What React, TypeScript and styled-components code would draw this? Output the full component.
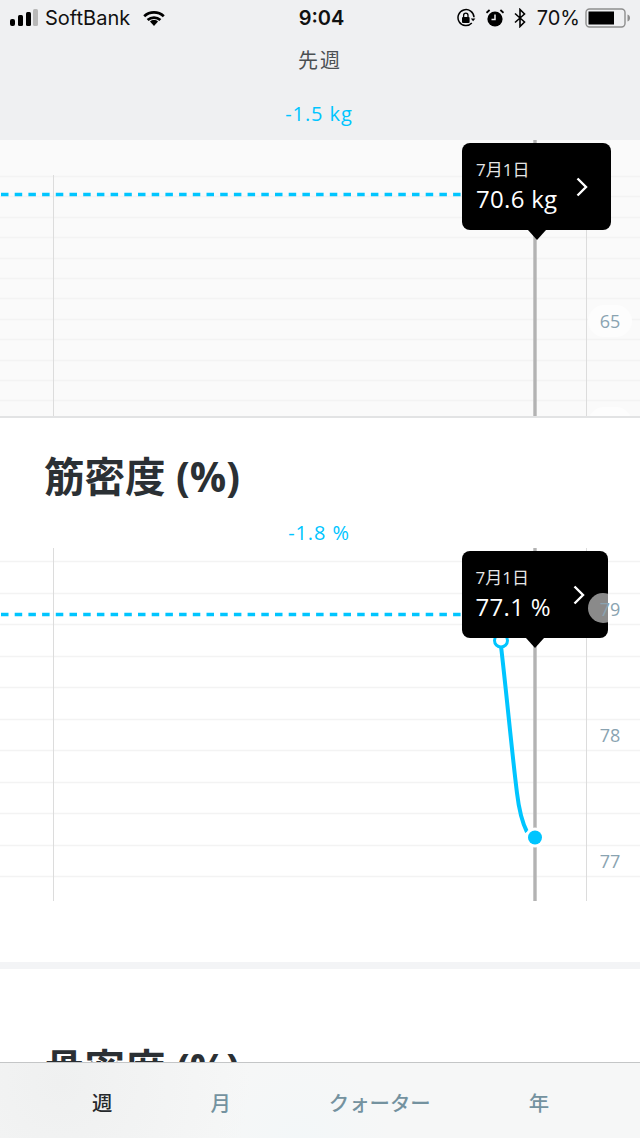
import React, {FC} from 'react';
import styled, {createGlobalStyle} from 'styled-components';

const UI_FONT = `"Open Sans", "Noto Sans CJK JP", sans-serif`;
const BLUE = '#00c5ff';

const GlobalStyle = createGlobalStyle`
  html, body {
    margin: 0;
    padding: 0;
    background: #ffffff;
  }
`;

const Page = styled.div`
  display: flex;
  flex-direction: column;
  width: 640px;
  height: 1138px;
  overflow: hidden;
  font-family: ${UI_FONT};
`;

const Header = styled.header`
  height: 140px;
  flex: none;
  background: #eff0f2;
  text-align: center;
`;

const StatusBar = styled.div`
  display: grid;
  grid-template-columns: 1fr auto 1fr;
  align-items: center;
  height: 35px;
  padding: 0 9px 0 10px;
  font-family: Inter, "Liberation Sans", sans-serif;
  color: #111;
`;

const StatusGroup = styled.div<{right?: boolean}>`
  display: flex;
  align-items: center;
  justify-content: ${(props) => (props.right ? 'flex-end' : 'flex-start')};
  gap: ${(props) => (props.right ? '10px' : '7px')};
`;

const Carrier = styled.span`
  margin-right: 5px;
  font-size: 20px;
`;

const Clock = styled.span`
  margin-left: 2px;
  font-weight: 600;
  font-size: 20px;
`;

const Percent = styled.span`
  margin-left: 1px;
  margin-right: -5px;
  font-size: 20px;
`;

const PeriodLabel = styled.div`
  margin-top: 11px;
  height: 30px;
  line-height: 30px;
  font-size: 20px;
  letter-spacing: 2px;
  color: #4a4f52;
`;

const Delta = styled.div`
  height: 24px;
  padding-right: 2px;
  line-height: 24px;
  font-size: 20px;
  letter-spacing: 0.9px;
  color: ${BLUE};
  text-align: center;
`;

const HeaderDelta = styled(Delta)`
  margin-top: 26px;
`;

const Content = styled.main`
  flex: 1;
  min-height: 0;
  overflow: hidden;
`;

const WeightPanel = styled.section`
  background: #fafafa;
  border-bottom: 2px solid #e2e3e4;
`;

const ChartCanvas = styled.div<{h: number}>`
  position: relative;
  width: 640px;
  height: ${(props) => props.h}px;
  overflow: hidden;

  svg {
    display: block;
  }
`;

const MetricSection = styled.section<{top: number}>`
  padding-top: ${(props) => props.top}px;
  background: #ffffff;
`;

const MetricTitle = styled.h2`
  margin: 0 0 23px 44px;
  height: 42px;
  line-height: 42px;
  font-size: 40.5px;
  font-weight: 700;
  color: #2b3034;
`;

const MetricChart = styled.div`
  margin-top: 3px;
  padding-bottom: 61px;
`;

const SectionDivider = styled.div`
  height: 7px;
  background: #f3f4f6;
`;

const Tooltip = styled.div<{left: number; top: number; w: number}>`
  position: absolute;
  left: ${(props) => props.left}px;
  top: ${(props) => props.top}px;
  width: ${(props) => props.w}px;
  height: 87px;
  box-sizing: border-box;
  padding: 14px 0 0 14px;
  background: #000;
  border-radius: 8px;
  color: #fff;

  &::after {
    content: '';
    position: absolute;
    left: 50%;
    bottom: -10px;
    margin-left: -9px;
    border-left: 9px solid transparent;
    border-right: 9px solid transparent;
    border-top: 10px solid #000;
  }
`;

const TooltipDate = styled.div`
  position: relative;
  height: 26px;
  line-height: 26px;
  font-size: 17px;
  color: #e6e6e6;
`;

const TooltipValue = styled.div`
  position: relative;
  height: 32px;
  line-height: 32px;
  font-size: 24px;
  letter-spacing: 0.3px;
`;

const TooltipChevron = styled.svg`
  position: absolute;
  right: 23px;
  top: 34px;
`;

const TouchClip = styled.div`
  position: absolute;
  inset: 0;
  border-radius: 8px;
  overflow: hidden;
`;

const TouchRipple = styled.div`
  position: absolute;
  left: 126px;
  top: 42px;
  width: 30px;
  height: 30px;
  border-radius: 50%;
  background: #8a8a8a;
`;

const AxisLabel = styled.span<{y: number; halo?: boolean}>`
  position: absolute;
  left: 588px;
  top: ${(props) => props.y}px;
  width: 44px;
  height: 32px;
  line-height: 32px;
  text-align: center;
  font-size: 18px;
  color: #8aa3b1;
  border-radius: 16px;
  background: ${(props) => (props.halo ? '#fdfdfd' : 'transparent')};
`;

const TabBar = styled.nav`
  flex: none;
  display: flex;
  align-items: center;
  gap: 98px;
  height: 76px;
  padding: 2px 0 0 92px;
  box-sizing: border-box;
  border-top: 1px solid #c4c6c7;
  background:
    radial-gradient(circle at 60px 20px, #eff0f0 0, transparent 190px),
    radial-gradient(circle at 300px 80px, #f3f7f8 0, transparent 90px),
    #f6f7f7;
`;

const Tab = styled.span<{active?: boolean}>`
  font-size: 20.4px;
  font-weight: 500;
  color: ${(props) => (props.active ? '#25292c' : '#74929f')};
`;

// grid lines are evenly spaced, start and step come from the screenshot
const gridYs = (start: number, step: number, count: number) =>
  Array.from({length: count}, (_, i) => Math.round(start + step * i) + 0.5);

interface GridProps {
  h: number;
  lines: number[];
  axisTop: number;
  gridColor: string;
}

const ChartGrid: FC<GridProps> = ({h, lines, axisTop, gridColor}) => (
  <>
    {lines.map((y) => (
      <line key={y} x1={0} x2={640} y1={y} y2={y} stroke={gridColor} strokeWidth={1.5} />
    ))}
    <line x1={53.5} x2={53.5} y1={axisTop} y2={h} stroke="#dcdcdc" />
    <line x1={586.5} x2={586.5} y1={axisTop} y2={h} stroke="#dcdcdc" />
    <line x1={535} x2={535} y1={0} y2={h} stroke="#b3b3b3" strokeWidth={3.4} />
  </>
);

const Chevron: FC = () => (
  <TooltipChevron width="12" height="20" viewBox="0 0 12 20">
    <path d="M1.5 1.5l8.5 8.5-8.5 8.5" fill="none" stroke="#fff" strokeWidth="2.4" />
  </TooltipChevron>
);

const SignalIcon: FC = () => (
  <svg width="28" height="17" viewBox="0 0 28 17">
    <rect x="0" y="10" width="5" height="7" rx="2" fill="#000" />
    <rect x="8" y="6" width="5" height="11" rx="1.5" fill="#000" />
    <rect x="16" y="3" width="5" height="14" rx="1.5" fill="#000" />
    <rect x="23" y="0" width="5" height="17" rx="1.5" fill="#b8b8b8" />
  </svg>
);

const WifiIcon: FC = () => (
  <svg width="24" height="17" viewBox="0 0 24 17">
    <path d="M12 17l-4-4.6c2.2-1.9 5.8-1.9 8 0z" fill="#000" />
    <path d="M2.2 7.2c5.6-5 14-5 19.6 0M5.6 11c3.7-3.2 9.1-3.2 12.8 0" fill="none" stroke="#000" strokeWidth="2.8" />
  </svg>
);

const RotationLockIcon: FC = () => (
  <svg width="20" height="20" viewBox="0 0 20 20">
    <path d="M17.6 11.5A8 8 0 1 1 16.6 5.4" fill="none" stroke="#000" strokeWidth="1.5" transform="rotate(30 10 10)" />
    <path d="M14.8 10.4h4.6l-2.3 2.8z" fill="#000" />
    <rect x="6" y="9" width="7.6" height="6" rx="1" fill="#000" />
    <path d="M7.6 9V7.4a2.2 2.2 0 0 1 4.4 0V9" fill="none" stroke="#000" strokeWidth="1.3" />
  </svg>
);

const AlarmIcon: FC = () => (
  <svg width="18" height="18" viewBox="0 0 18 18">
    <circle cx="9" cy="10" r="7.6" fill="#000" />
    <path d="M9 5.5V10.5H5.5" fill="none" stroke="#eff0f2" strokeWidth="1.5" />
    <path d="M0.5 3.8L3.6 1M17.5 3.8L14.4 1" fill="none" stroke="#000" strokeWidth="1.8" />
  </svg>
);

const BluetoothIcon: FC = () => (
  <svg width="12" height="20" viewBox="0 0 12 20">
    <path d="M1 5.5L10.5 14 6 18.5V1.5L10.5 6 1 14.5" fill="none" stroke="#000" strokeWidth="1.6" />
  </svg>
);

const BatteryIcon: FC = () => (
  <svg width="46" height="20" viewBox="0 0 46 20">
    <rect x="1" y="1" width="39" height="18" rx="3.5" fill="none" stroke="#8e8e8e" strokeWidth="1.4" />
    <rect x="3.5" y="3.5" width="25.5" height="13" fill="#000" />
    <path d="M42.5 6.5c1.6.3 2.5 1.8 2.5 3.5s-.9 3.2-2.5 3.5z" fill="#8e8e8e" />
  </svg>
);

const App: FC = () => {
  return (
    <Page>
      <GlobalStyle />
      <Header>
        <StatusBar>
          <StatusGroup>
            <SignalIcon />
            <Carrier>SoftBank</Carrier>
            <WifiIcon />
          </StatusGroup>
          <Clock>9:04</Clock>
          <StatusGroup right>
            <RotationLockIcon />
            <AlarmIcon />
            <BluetoothIcon />
            <Percent>70%</Percent>
            <BatteryIcon />
          </StatusGroup>
        </StatusBar>
        <PeriodLabel>先週</PeriodLabel>
        <HeaderDelta>-1.5 kg</HeaderDelta>
      </Header>

      <Content>
        <WeightPanel>
          <ChartCanvas h={276}>
            <svg width="640" height="276">
              <ChartGrid h={276} axisTop={35} gridColor="#f3f3f3" lines={gridYs(36, 20.4, 12)} />
              <line x1={1} x2={462} y1={54.5} y2={54.5} stroke={BLUE} strokeWidth={3.4} strokeDasharray="7.5 6.2" />
            </svg>
            <AxisLabel y={165} halo>65</AxisLabel>
            <AxisLabel y={267} halo />
            <Tooltip left={462} top={3} w={149}>
              <TooltipDate>7月1日</TooltipDate>
              <TooltipValue>70.6 kg</TooltipValue>
              <Chevron />
            </Tooltip>
          </ChartCanvas>
        </WeightPanel>

        <MetricSection top={38}>
          <MetricTitle>筋密度 (%)</MetricTitle>
          <Delta>-1.8 %</Delta>
          <MetricChart>
            <ChartCanvas h={353}>
              <svg width="640" height="353">
                <ChartGrid h={353} axisTop={0} gridColor="#f3f3f3" lines={gridYs(13, 31.5, 11)} />
                <line x1={1} x2={462} y1={66.5} y2={66.5} stroke={BLUE} strokeWidth={3.4} strokeDasharray="7.5 6.2" />
                <path d="M501 98C507 150 512 205 517 245C519 262 523 276 527 284" fill="none" stroke={BLUE} strokeWidth={4} />
                <circle cx={501} cy={92.5} r={6.5} fill="#fff" stroke={BLUE} strokeWidth={3} />
                <circle cx={535} cy={289.5} r={10} fill="#fff" />
                <circle cx={535} cy={289.5} r={7} fill={BLUE} />
              </svg>
              <Tooltip left={461.5} top={3} w={146}>
                <TouchClip>
                  <TouchRipple />
                </TouchClip>
                <TooltipDate>7月1日</TooltipDate>
                <TooltipValue>77.1 %</TooltipValue>
                <Chevron />
              </Tooltip>
              <AxisLabel y={45}>79</AxisLabel>
              <AxisLabel y={171}>78</AxisLabel>
              <AxisLabel y={297}>77</AxisLabel>
            </ChartCanvas>
          </MetricChart>
        </MetricSection>

        <SectionDivider />

        <MetricSection top={79}>
          <MetricTitle>骨密度 (%)</MetricTitle>
        </MetricSection>
      </Content>

      <TabBar>
        <Tab active>週</Tab>
        <Tab>月</Tab>
        <Tab>クォーター</Tab>
        <Tab>年</Tab>
      </TabBar>
    </Page>
  );
};

export default App;
